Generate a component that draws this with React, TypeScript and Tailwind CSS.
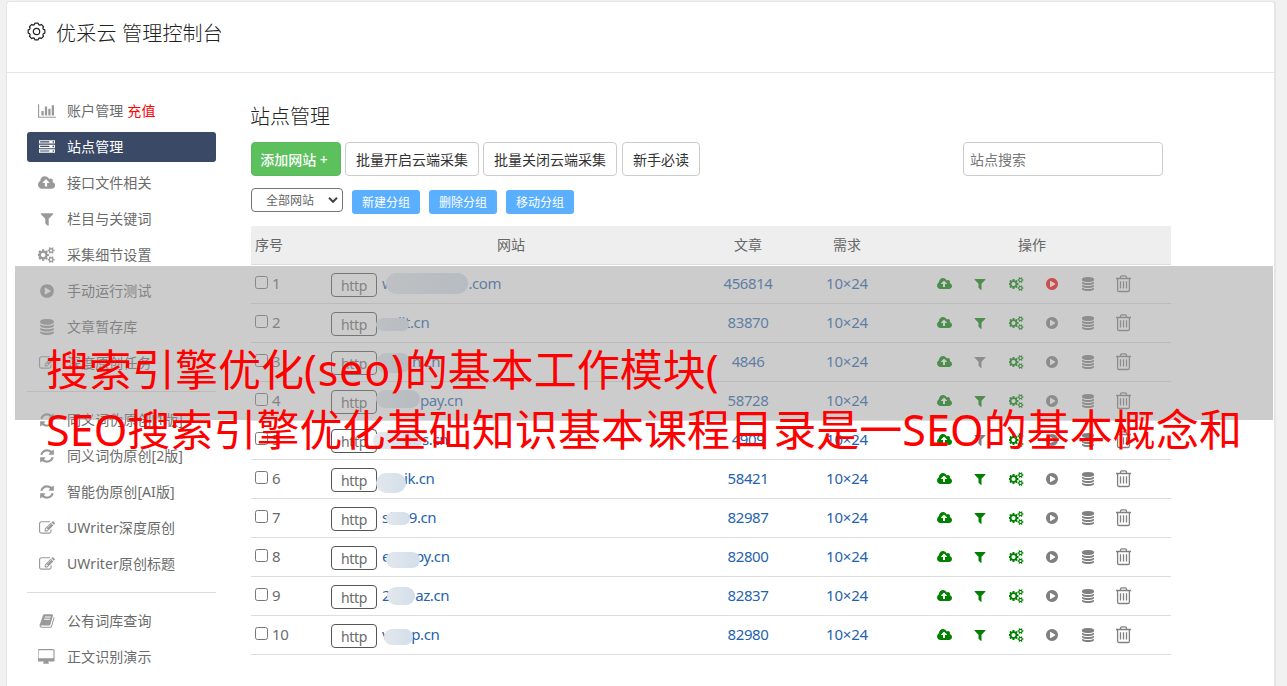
import type { ReactNode } from "react";
import clsx from "clsx";

type IconProps = { path: string; width?: number; className?: string };

function Icon({ path, width = 1792, className }: IconProps) {
  return (
    <svg viewBox={`0 0 ${width} 1792`} className={clsx("shrink-0 fill-current", className)}>
      <path d={path} />
    </svg>
  );
}

const chart =
  "M640 896v512h-256v-512h256zm384-512v1024h-256v-1024h256zm1024 1152v128h-2048v-1536h128v1408h1920zm-640-896v768h-256v-768h256zm384-384v1152h-256v-1152h256z";
const server =
  "M128 1408h1024v-128h-1024v128zm0-512h1024v-128h-1024v128zm1568 448q0-40-28-68t-68-28-68 28-28 68 28 68 68 28 68-28 28-68zm-1568-960h1024v-128h-1024v128zm1568 448q0-40-28-68t-68-28-68 28-28 68 28 68 68 28 68-28 28-68zm0-512q0-40-28-68t-68-28-68 28-28 68 28 68 68 28 68-28 28-68zm96 832v384h-1792v-384h1792zm0-512v384h-1792v-384h1792zm0-512v384h-1792v-384h1792z";
const cloud =
  "M1280 864q0-14-9-23l-352-352q-9-9-23-9t-23 9l-351 351q-10 12-10 24 0 14 9 23t23 9h224v352q0 13 9.5 22.5t22.5 9.5h192q13 0 22.5-9.5t9.5-22.5v-352h224q13 0 22.5-9.5t9.5-22.5zm640 288q0 159-112.5 271.5t-271.5 112.5h-1088q-185 0-316.5-131.5t-131.5-316.5q0-130 70-240t188-165q-2-30-2-43 0-212 150-362t362-150q156 0 285.5 87t188.5 231q71-62 166-62 106 0 181 75t75 181q0 76-41 138 130 31 213.5 135.5t83.5 238.5z";
const filter =
  "M1595 295q17 41-14 70l-493 493v742q0 42-39 59-13 5-25 5-27 0-45-19l-256-256q-19-19-19-45v-486l-493-493q-31-29-14-70 17-39 59-39h1280q42 0 59 39z";
const cogs =
  "M832 896q0-106-75-181t-181-75-181 75-75 181 75 181 181 75 181-75 75-181zm768 512q0-52-38-90t-90-38-90 38-38 90q0 53 37.5 90.5t90.5 37.5 90.5-37.5 37.5-90.5zm0-1024q0-52-38-90t-90-38-90 38-38 90q0 53 37.5 90.5t90.5 37.5 90.5-37.5 37.5-90.5zm-384 421v185q0 10-7 19.5t-16 10.5l-155 24q-11 35-32 76 34 48 90 115 7 11 7 20 0 12-7 19-23 30-82.5 89.5t-78.5 59.5q-11 0-21-7l-115-90q-37 19-77 31-11 108-23 155-7 24-30 24h-186q-11 0-20-7.5t-10-17.5l-23-153q-34-10-75-31l-118 89q-7 7-20 7-11 0-21-8-144-133-144-160 0-9 7-19 10-14 41-53t47-61q-23-44-35-82l-152-24q-10-1-17-9.5t-7-19.5v-185q0-10 7-19.5t16-10.5l155-24q11-35 32-76-34-48-90-115-7-11-7-20 0-12 7-20 22-30 82-89t79-59q11 0 21 7l115 90q34-18 77-32 11-108 23-154 7-24 30-24h186q11 0 20 7.5t10 17.5l23 153q34 10 75 31l118-89q8-7 20-7 11 0 21 8 144 133 144 160 0 8-7 19-12 16-42 54t-45 60q23 48 34 82l152 23q10 2 17 10.5t7 19.5zm640 533v140q0 16-149 31-12 27-30 52 51 113 51 138 0 4-4 7-122 71-124 71-8 0-46-47t-52-68q-20 2-30 2t-30-2q-14 21-52 68t-46 47q-2 0-124-71-4-3-4-7 0-25 51-138-18-25-30-52-149-15-149-31v-140q0-16 149-31 13-29 30-52-51-113-51-138 0-4 4-7 4-2 35-20t59-34 30-16q8 0 46 46.5t52 67.5q20-2 30-2t30 2q51-71 92-112l6-2q4 0 124 70 4 3 4 7 0 25-51 138 17 23 30 52 149 15 149 31zm0-1024v140q0 16-149 31-12 27-30 52 51 113 51 138 0 4-4 7-122 71-124 71-8 0-46-47t-52-68q-20 2-30 2t-30-2q-14 21-52 68t-46 47q-2 0-124-71-4-3-4-7 0-25 51-138-18-25-30-52-149-15-149-31v-140q0-16 149-31 13-29 30-52-51-113-51-138 0-4 4-7 4-2 35-20t59-34 30-16q8 0 46 46.5t52 67.5q20-2 30-2t30 2q51-71 92-112l6-2q4 0 124 70 4 3 4 7 0 25-51 138 17 23 30 52 149 15 149 31z";
const play =
  "M896 128q209 0 385.5 103t279.5 279.5 103 385.5-103 385.5-279.5 279.5-385.5 103-385.5-103-279.5-279.5-103-385.5 103-385.5 279.5-279.5 385.5-103zm384 823q32-18 32-55t-32-55l-544-320q-31-19-64-1-32 19-32 56v640q0 37 32 56 16 8 32 8 17 0 32-9z";
const database =
  "M896 768q237 0 443-43t325-127v170q0 69-103 128t-280 93.5-385 34.5-385-34.5-280-93.5-103-128v-170q119 84 325 127t443 43zm0 768q237 0 443-43t325-127v170q0 69-103 128t-280 93.5-385 34.5-385-34.5-280-93.5-103-128v-170q119 84 325 127t443 43zm0-384q237 0 443-43t325-127v170q0 69-103 128t-280 93.5-385 34.5-385-34.5-280-93.5-103-128v-170q119 84 325 127t443 43zm0-1152q208 0 385 34.5t280 93.5 103 128v128q0 69-103 128t-280 93.5-385 34.5-385-34.5-280-93.5-103-128v-128q0-69 103-128t280-93.5 385-34.5z";
const refresh =
  "M1639 1056q0 5-1 7-64 268-268 434.5t-478 166.5q-146 0-282.5-55t-243.5-157l-129 129q-19 19-45 19t-45-19-19-45v-448q0-26 19-45t45-19h448q26 0 45 19t19 45-19 45l-137 137q71 66 161 102t187 36q134 0 250-65t186-179q11-17 53-117 8-23 30-23h192q13 0 22.5 9.5t9.5 22.5zm25-800v448q0 26-19 45t-45 19h-448q-26 0-45-19t-19-45 19-45l138-138q-148-137-349-137-134 0-250 65t-186 179q-11 17-53 117-8 23-30 23h-199q-13 0-22.5-9.5t-9.5-22.5v-7q65-268 270-434.5t480-166.5q146 0 284 55.5t245 156.5l130-129q19-19 45-19t45 19 19 45z";
const edit =
  "M888 1184l116-116-152-152-116 116v56h96v96h56zm440-720q-16-16-33 1l-350 350q-17 17-1 33t33-1l350-350q17-17 1-33zm80 594v190q0 119-84.5 203.5t-203.5 84.5h-832q-119 0-203.5-84.5t-84.5-203.5v-832q0-119 84.5-203.5t203.5-84.5h832q63 0 117 25 15 7 18 23 3 17-9 29l-49 49q-14 14-32 8-23-6-45-6h-832q-66 0-113 47t-47 113v832q0 66 47 113t113 47h832q66 0 113-47t47-113v-126q0-13 9-22l64-64q15-15 35-7t20 29zm-96-738l288 288-672 672h-288v-288zm444 132l-92 92-288-288 92-92q28-28 68-28t68 28l152 152q28 28 28 68t-28 68z";
const book =
  "M1703 478q40 57 18 129l-275 906q-19 64-76.5 107.5t-122.5 43.5h-923q-77 0-148.5-53.5t-99.5-131.5q-24-67-2-127 0-4 3-27t4-37q1-8-3-21.5t-3-19.5q2-11 8-21t16.5-23.5 16.5-23.5q23-38 45-91.5t30-91.5q3-10 .5-30t-.5-28q3-11 17-28t17-23q21-36 42-92t25-90q1-9-2.5-32t.5-28q4-13 22-30.5t22-22.5q19-26 42.5-84.5t27.5-96.5q1-8-3-25.5t-2-26.5q2-8 9-18t18-23 17-21q8-12 16.5-30.5t15-35 16-36 19.5-32 26.5-23.5 36-11.5 47.5 5.5l-1 3q38-9 51-9h761q74 0 114 56t18 130l-274 906q-36 119-71.5 153.5t-128.5 34.5h-869q-27 0-38 15-11 16-1 43 24 70 144 70h923q29 0 56-15.5t35-41.5l300-987q7-22 5-57 38 15 59 43zm-1064 2q-4 13 2 22.5t20 9.5h608q13 0 25.5-9.5t16.5-22.5l21-64q4-13-2-22.5t-20-9.5h-608q-13 0-25.5 9.5t-16.5 22.5zm-83 256q-4 13 2 22.5t20 9.5h608q13 0 25.5-9.5t16.5-22.5l21-64q4-13-2-22.5t-20-9.5h-608q-13 0-25.5 9.5t-16.5 22.5z";
const desktop =
  "M1728 992v-832q0-13-9.5-22.5t-22.5-9.5h-1600q-13 0-22.5 9.5t-9.5 22.5v832q0 13 9.5 22.5t22.5 9.5h1600q13 0 22.5-9.5t9.5-22.5zm128-832v1088q0 66-47 113t-113 47h-544q0 37 16 77.5t32 71 16 43.5q0 26-19 45t-45 19h-512q-26 0-45-19t-19-45q0-14 16-44t32-70 16-78h-544q-66 0-113-47t-47-113v-1088q0-66 47-113t113-47h1600q66 0 113 47t47 113z";

function TrashIcon() {
  return (
    <svg viewBox="0 0 15 18" className="h-[18px] w-[15px] fill-none stroke-current stroke-[1.3]">
      <path d="M0 3.5h15M4.5 3.5V2.2q0-1.4 1.4-1.4h3.2q1.4 0 1.4 1.4v1.3M1.6 3.5v11.4q0 1.6 1.6 1.6h8.6q1.6 0 1.6-1.6V3.5M4.5 6.3v7.2M7.5 6.3v7.2M10.5 6.3v7.2" />
    </svg>
  );
}

// eight rounded teeth around the hub
const gearPoints = Array.from({ length: 8 }, (_, k) =>
  [
    [-11, 8.5],
    [11, 8.5],
    [17, 7.2],
    [28, 7.2],
  ].map(([offset, r]) => {
    const angle = ((k * 45 + offset) * Math.PI) / 180;
    return `${(9.5 + r * Math.cos(angle)).toFixed(2)},${(9.5 + r * Math.sin(angle)).toFixed(2)}`;
  })
)
  .flat()
  .join(" ");

function GearIcon() {
  return (
    <svg viewBox="0 0 19 19" className="h-[19px] w-[19px] fill-none stroke-current stroke-[1.2]" strokeLinejoin="round">
      <circle cx="9.5" cy="9.5" r="3.2" />
      <polygon points={gearPoints} />
    </svg>
  );
}

const menuGroups = [
  [
    { icon: chart, width: 2048, label: "账户管理", extra: "充值" },
    { icon: server, label: "站点管理", active: true },
    { icon: cloud, width: 1920, label: "接口文件相关" },
    { icon: filter, label: "栏目与关键词" },
    { icon: cogs, width: 1920, label: "采集细节设置" },
    { icon: play, label: "手动运行测试" },
    { icon: database, label: "文章暂存库" },
    { icon: edit, label: "深度原创任务" },
  ],
  [
    { icon: refresh, label: "同义词伪原创[1版]" },
    { icon: refresh, label: "同义词伪原创[2版]" },
    { icon: refresh, label: "智能伪原创[AI版]" },
    { icon: edit, label: "UWriter深度原创" },
    { icon: edit, label: "UWriter原创标题" },
  ],
  [
    { icon: book, label: "公有词库查询" },
    { icon: desktop, width: 1920, label: "正文识别演示" },
  ],
] as { icon: string; width?: number; label: string; extra?: string; active?: boolean }[][];

// blur: [left, top, width, height] of the patch that hides part of the domain
const sites = [
  { pre: "w", post: ".com", gap: 75, count: "456814", blur: [4, 8, 82, 21], running: true },
  { pre: "", post: "llt.cn", gap: 16, count: "83870", blur: [-6, 14, 33, 13] },
  { pre: "", post: "n.cn", gap: 30, count: "4846", blur: [-6, 10, 35, 20], noFilter: true },
  { pre: "", post: "pay.cn", gap: 38, count: "58728", blur: [-6, 8, 44, 18] },
  { pre: "", post: "s.cn", gap: 40, count: "4909", blur: [-9, 11, 49, 17], noFilter: true },
  { pre: "", post: "ik.cn", gap: 22, count: "58421", blur: [-6, 13, 30, 20] },
  { pre: "sf", post: "39.cn", gap: 7, count: "82987", blur: [4, 13, 24, 13] },
  { pre: "e", post: "py.cn", gap: 25, count: "82800", blur: [4, 14, 34, 16] },
  { pre: "2", post: "az.cn", gap: 25, count: "82837", blur: [5, 10, 28, 18] },
  { pre: "v", post: "p.cn", gap: 22, count: "82980", blur: [2, 13, 29, 16] },
];

function Btn({ children, className }: { children: ReactNode; className?: string }) {
  return (
    <button className={clsx("h-[34px] rounded border pt-px text-sm whitespace-nowrap", className)}>
      {children}
    </button>
  );
}

function GroupBtn({ children }: { children: ReactNode }) {
  return (
    <button className="h-6 w-[68px] rounded-[3px] bg-[#5aafff] pt-0.5 text-xs leading-[22px] text-white">
      {children}
    </button>
  );
}

function Sidebar() {
  return (
    <aside className="w-[189px] shrink-0">
      {menuGroups.map((group, idx) => (
        <ul
          key={idx}
          className={clsx("flex flex-col gap-1.5", idx > 0 && "mt-[13px] border-t border-[#ddd] pt-[13px]")}
        >
          {group.map((item) => (
            <li
              key={item.label}
              className={clsx(
                "flex h-[30px] items-center rounded-[3px]",
                item.active ? "bg-[#3a4a66] text-white" : "text-[#6b6b6b]"
              )}
            >
              <span className={clsx("flex w-10 justify-center", !item.active && "text-[#999]")}>
                <Icon path={item.icon} width={item.width} className="h-4" />
              </span>
              <span className="text-sm tracking-[0.08px] whitespace-nowrap">
                {item.label}
                {item.extra && <span className="ml-1 text-[#f00]">{item.extra}</span>}
              </span>
            </li>
          ))}
        </ul>
      ))}
    </aside>
  );
}

function SiteTable() {
  const cols = "grid grid-cols-[76px_368px_106px_92px_278px]";
  return (
    <div className="mt-3 w-[920px]">
      <div className={clsx(cols, "h-[39px] items-center border-b border-[#ddd] bg-[#eee] text-center text-sm text-[#666]")}>
        <span className="pl-1 text-left">序号</span>
        <span>网站</span>
        <span>文章</span>
        <span>需求</span>
        <span>操作</span>
      </div>
      {sites.map((site, idx) => (
        <div key={idx} className={clsx(cols, "h-[39px] items-center border-b border-[#ddd] text-center text-[15px] tracking-[-0.4px] text-[#1f63ac]")}>
          <label className="flex items-center gap-1 pb-0.5 pl-1 text-[#6b6b6b]">
            <input type="checkbox" className="mb-0.5 h-[13px] w-[13px]" />
            {idx + 1}
          </label>
          <div className="flex h-[38px] items-center pl-1">
            <span className="mt-px h-6 w-[46px] rounded border border-[#555] text-sm leading-6 tracking-[-0.3px] text-[#6b6b6b]">http</span>
            <a className="relative ml-[5px] flex h-[38px] items-center pb-0.5">
              {site.pre}
              <span style={{ width: site.gap }} />
              {site.post}
              <span
                className="absolute rounded-[10px] bg-linear-to-r from-[#e3e7ec] to-[#d3dfeb]"
                style={{ left: site.blur[0], top: site.blur[1], width: site.blur[2], height: site.blur[3] }}
              />
            </a>
          </div>
          <span className="pb-0.5">{site.count}</span>
          <span className="pb-0.5 tracking-[-0.2px]">10×24</span>
          <div className="flex items-center pl-[33px] text-[#808080]">
            <span className="flex w-9 justify-center text-[#008000]"><Icon path={cloud} width={1920} className="h-3.5" /></span>
            <span className={clsx("flex w-9 justify-center", !site.noFilter && "text-[#008000]")}><Icon path={filter} className="h-3.5" /></span>
            <span className="flex w-9 justify-center text-[#008000]"><Icon path={cogs} width={1920} className="h-3.5" /></span>
            <span className={clsx("flex w-9 justify-center", site.running && "text-[#f00]")}><Icon path={play} className="h-3.5" /></span>
            <span className="flex w-9 justify-center"><Icon path={database} className="h-3.5" /></span>
            <span className="flex w-[34px] justify-center"><TrashIcon /></span>
          </div>
        </div>
      ))}
    </div>
  );
}

export default function App() {
  return (
    <div className="relative h-[686px] w-[1287px] overflow-hidden bg-[#f1f1f1] px-1.5 pt-px font-['Noto_Sans','Noto_Sans_CJK_SC',sans-serif]">
      <div className="h-[700px] w-[1270px] rounded border border-r-2 border-[#e5e5e5] bg-white">
        <header className="flex h-[71px] items-start gap-2.5 border-b border-[#e5e5e5] pt-4 pl-5 text-[#222]">
          <span className="mt-1"><GearIcon /></span>
          <h1 className="text-xl leading-8 font-light tracking-[0.2px]">优采云 管理控制台</h1>
        </header>
        <div className="flex gap-[35px] pt-[23px] pl-5">
          <Sidebar />
          <main className="w-[920px] pt-1.5">
            <h2 className="-ml-px pt-px text-xl leading-[27px] font-light text-[#222]">站点管理</h2>
            <div className="mt-3 flex">
              <Btn className="mr-1 w-[90px] border-[#5cb85c] bg-[#5cc05c] pr-1 font-medium text-white">添加网站 +</Btn>
              <Btn className="mr-1 w-[134px] border-[#ccc] text-[#333]">批量开启云端采集</Btn>
              <Btn className="mr-[5px] w-[134px] border-[#ccc] text-[#333]">批量关闭云端采集</Btn>
              <Btn className="w-[78px] border-[#ccc] text-[#333]">新手必读</Btn>
              <input
                placeholder="站点搜索"
                className="mr-2 ml-auto h-[34px] w-[200px] rounded border border-[#ccc] px-1.5 text-sm placeholder:text-[#777]"
              />
            </div>
            <div className="mt-3 flex items-start gap-[9px]">
              <button className="flex h-6 w-[92px] items-center justify-between rounded border border-[#767676] pr-1 pl-3.5 text-xs text-[#666]">
                <span className="pt-px">全部网站</span>
                <svg viewBox="0 0 10 6" className="h-1.5 w-2.5 fill-none stroke-[#444] stroke-2">
                  <path d="M1 .8 5 4.8 9 .8" />
                </svg>
              </button>
              <div className="mt-0.5 flex gap-[9px]">
                <GroupBtn>新建分组</GroupBtn>
                <GroupBtn>删除分组</GroupBtn>
                <GroupBtn>移动分组</GroupBtn>
              </div>
            </div>
            <SiteTable />
          </main>
        </div>
      </div>

      {/* Caption band over the console */}
      <div className="absolute top-[266px] left-[15px] h-[154px] w-[1258px] bg-[#999]/50" />
      <p className="absolute top-[340px] left-[46px] text-[43px] leading-[60px] whitespace-nowrap text-[#f00]">
        搜索引擎优化<span className="tracking-[0.8px]">(seo)</span>的基本工作模块(
        <br />
        <span className="tracking-[0.06px]">SEO搜索引擎优化基础知识基本课程目录是一SEO的基本概念和</span>
      </p>
    </div>
  );
}
